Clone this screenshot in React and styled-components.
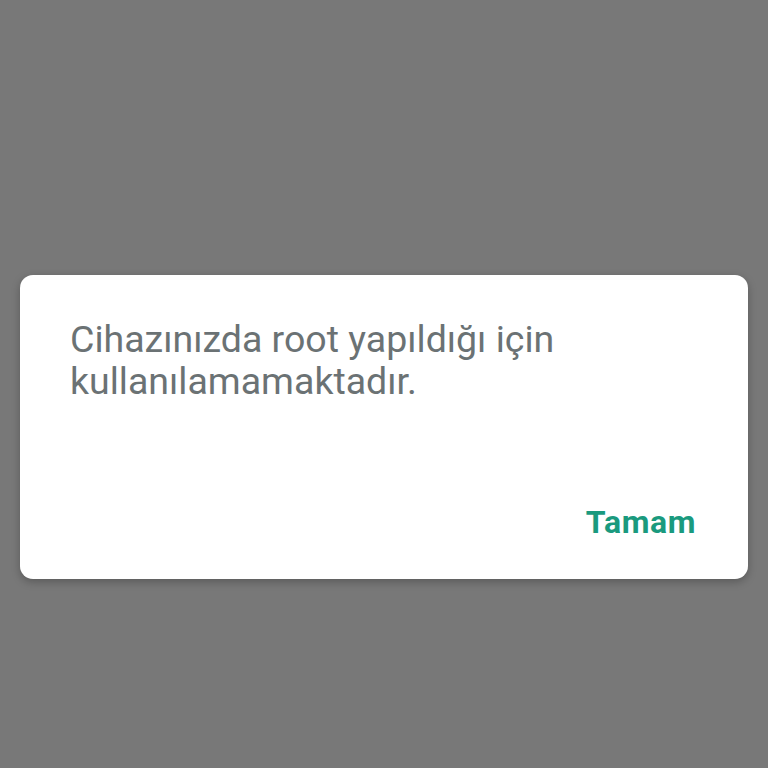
import React from 'react';
import styled, { createGlobalStyle } from 'styled-components';

const Global = createGlobalStyle`
  html, body {
    margin: 0;
    padding: 0;
    background: #787878;
    font-family: Roboto, "Noto Sans", sans-serif;
  }
`;

const Overlay = styled.div`
  width: 768px;
  height: 768px;
  box-sizing: border-box;
  padding-top: 275px;
  display: flex;
  align-items: flex-start;
  justify-content: center;
  background: #787878;
`;

const Dialog = styled.div`
  box-sizing: border-box;
  width: 728px;
  height: 304px;
  background: #ffffff;
  border-radius: 13px;
  box-shadow: 0 3px 8px rgba(0, 0, 0, 0.25);
  display: flex;
  flex-direction: column;
  justify-content: space-between;
  padding: 43px 52px 38px 50px;
`;

const Message = styled.p`
  margin: 0;
  color: #6b7274;
  font-size: 37.5px;
  line-height: 42px;
  font-weight: 400;
  max-width: 560px;
`;

const Actions = styled.div`
  display: flex;
  justify-content: flex-end;
`;

const Button = styled.a`
  color: #1a9a7e;
  font-size: 32px;
  font-weight: 700;
  letter-spacing: 0.6px;
  text-decoration: none;
  cursor: pointer;
`;

export default function App() {
  return (
    <>
      <Global />
      <Overlay>
        <Dialog>
          <Message>Cihazınızda root yapıldığı için kullanılamamaktadır.</Message>
          <Actions>
            <Button>Tamam</Button>
          </Actions>
        </Dialog>
      </Overlay>
    </>
  );
}
